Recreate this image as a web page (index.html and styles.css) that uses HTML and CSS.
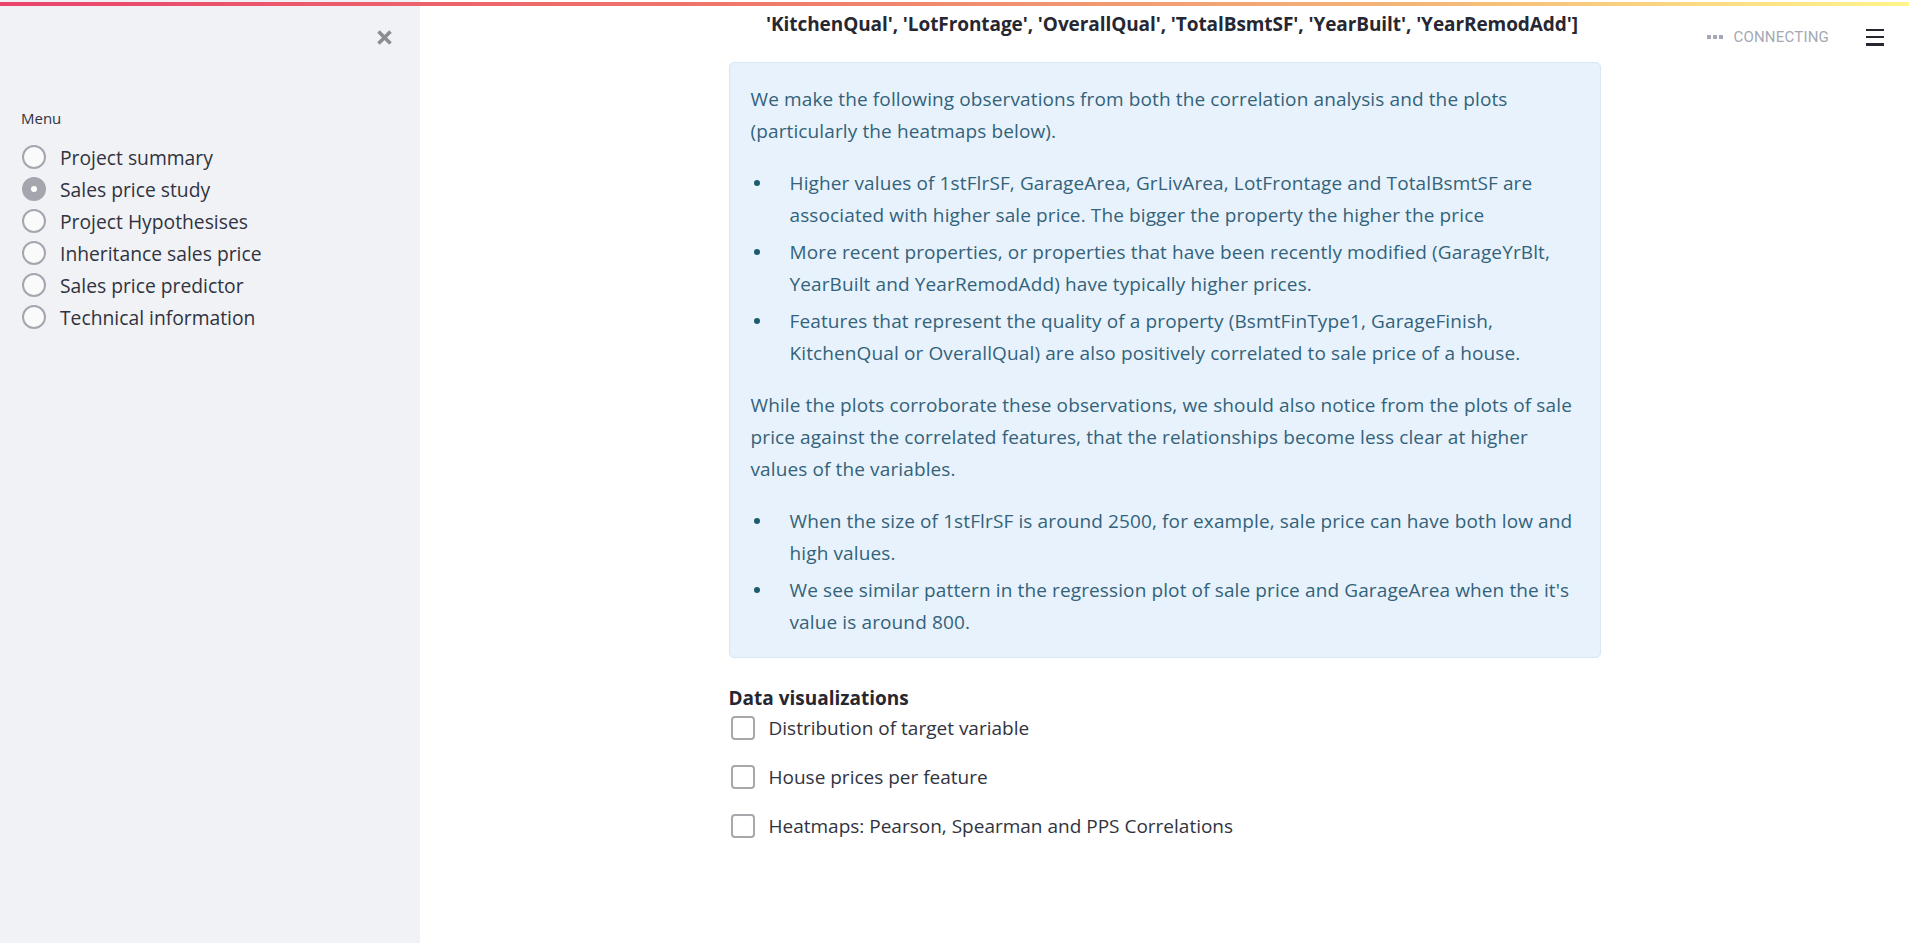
FILE: index.html
```html
<!DOCTYPE html>
<html lang="en">
<head>
<meta charset="utf-8">
<title>Sales price study</title>
<link rel="stylesheet" href="styles.css">
</head>
<body>
<div class="decoration"></div>
<div class="app">
  <aside class="sidebar">
    <div class="sidebar-top">
      <button class="close-btn" aria-label="Close sidebar">
        <svg width="17" height="17" viewBox="0 0 17 17"><path d="M2.5 2.5 L14.5 14.5 M14.5 2.5 L2.5 14.5" stroke="#8c8c91" stroke-width="3.6" stroke-linecap="butt"/></svg>
      </button>
    </div>
    <div class="menu-label">Menu</div>
    <ul class="radio-list">
      <li class="radio"><span class="circle"></span><span class="radio-text">Project summary</span></li>
      <li class="radio selected"><span class="circle"></span><span class="radio-text">Sales price study</span></li>
      <li class="radio"><span class="circle"></span><span class="radio-text">Project Hypothesises</span></li>
      <li class="radio"><span class="circle"></span><span class="radio-text">Inheritance sales price</span></li>
      <li class="radio"><span class="circle"></span><span class="radio-text">Sales price predictor</span></li>
      <li class="radio"><span class="circle"></span><span class="radio-text">Technical information</span></li>
    </ul>
  </aside>
  <main class="main">
    <div class="toolbar">
      <div class="status">
        <span class="dots"><i></i><i></i><i></i></span>
        <span class="status-text">CONNECTING</span>
      </div>
      <button class="hamburger" aria-label="Menu"><span></span><span></span><span></span></button>
    </div>
    <div class="block">
      <p class="feature-list">'KitchenQual', 'LotFrontage', 'OverallQual', 'TotalBsmtSF', 'YearBuilt', 'YearRemodAdd']</p>
      <div class="info">
        <p>We make the following observations from both the correlation analysis and the plots (particularly the heatmaps below).</p>
        <ul class="bullets">
          <li>Higher values of 1stFlrSF, GarageArea, GrLivArea, LotFrontage and TotalBsmtSF are associated with higher sale price. The bigger the property the higher the price</li>
          <li>More recent properties, or properties that have been recently modified (GarageYrBlt, YearBuilt and YearRemodAdd) have typically higher prices.</li>
          <li>Features that represent the quality of a property (BsmtFinType1, GarageFinish, KitchenQual or OverallQual) are also positively correlated to sale price of a house.</li>
        </ul>
        <p>While the plots corroborate these observations, we should also notice from the plots of sale price against the correlated features, that the relationships become less clear at higher<br>values of the variables.</p>
        <ul class="bullets last">
          <li>When the size of 1stFlrSF is around 2500, for example, sale price can have both low and high values.</li>
          <li>We see similar pattern in the regression plot of sale price and GarageArea when the it's value is around 800.</li>
        </ul>
      </div>
      <div class="section-title">Data visualizations</div>
      <div class="checks">
        <label class="check"><span class="box"></span><span class="check-text">Distribution of target variable</span></label>
        <label class="check"><span class="box"></span><span class="check-text">House prices per feature</span></label>
        <label class="check"><span class="box"></span><span class="check-text">Heatmaps: Pearson, Spearman and PPS Correlations</span></label>
      </div>
    </div>
  </main>
</div>
</body>
</html>
```

FILE: styles.css
```css
* { box-sizing: border-box; }
html, body {
  margin: 0;
  padding: 0;
  height: 100%;
  background: #ffffff;
  font-family: "Open Sans", "Noto Sans", sans-serif;
  color: #262730;
}
.decoration {
  position: fixed;
  top: 2px;
  left: 0;
  right: 0;
  height: 4px;
  background: linear-gradient(90deg, #e9436c 0%, #ef7a6b 40%, #f4b877 75%, #fff58c 100%);
  z-index: 10;
}
.app {
  display: flex;
  height: 100vh;
  overflow: hidden;
}
.sidebar {
  width: 420px;
  flex: 0 0 420px;
  background: #f0f2f6;
  padding: 0 0 0 21px;
}
.sidebar-top {
  display: flex;
  justify-content: flex-end;
  padding: 29px 27px 0 0;
  height: 108px;
}
.close-btn {
  border: 0;
  background: none;
  padding: 0;
  width: 17px;
  height: 17px;
  display: block;
  cursor: pointer;
}
.close-btn svg { display: block; }
.menu-label {
  font-size: 15px;
  line-height: 20px;
  color: #31333f;
  margin-bottom: 13px;
}
.radio-list {
  list-style: none;
  margin: 0;
  padding: 0;
}
.radio {
  display: flex;
  align-items: center;
  height: 32px;
}
.circle {
  width: 24px;
  height: 24px;
  border-radius: 50%;
  border: 2px solid #a4a6ad;
  background: #fafafa;
  margin: 0 14px 0 1px;
  flex: 0 0 24px;
}
.radio.selected .circle {
  background: #a4a6ad;
  border-color: #a4a6ad;
  position: relative;
}
.radio.selected .circle::after {
  content: "";
  position: absolute;
  left: 7px;
  top: 7px;
  width: 6px;
  height: 6px;
  border-radius: 50%;
  background: #ffffff;
}
.radio-text {
  font-size: 19.3px;
  color: #31333f;
}
.main {
  flex: 1;
  position: relative;
  display: flex;
  justify-content: center;
}
.toolbar {
  position: absolute;
  top: 22px;
  right: 25px;
  display: flex;
  align-items: center;
  gap: 37px;
  height: 30px;
}
.status {
  display: flex;
  align-items: center;
  gap: 10px;
}
.dots {
  display: flex;
  gap: 2px;
}
.dots i {
  display: block;
  width: 4px;
  height: 4px;
  background: #a3a8b4;
}
.status-text {
  font-family: Roboto, "Liberation Sans", sans-serif;
  font-size: 15px;
  color: #a3a8b4;
  letter-spacing: 0.2px;
}
.hamburger {
  border: 0;
  background: none;
  padding: 0;
  width: 18px;
  height: 17px;
  display: flex;
  flex-direction: column;
  justify-content: space-between;
}
.hamburger span {
  display: block;
  height: 2.5px;
  background: #262730;
}
.block {
  width: 872px;
  padding-top: 8px;
}
.feature-list {
  margin: 0 0 22px 0;
  font-size: 19px;
  font-weight: 700;
  line-height: 32px;
  text-align: center;
  padding-left: 15px;
  color: #262730;
  white-space: nowrap;
  letter-spacing: -0.08px;
}
.info {
  background: #e8f2fc;
  border: 1px solid #d6e6f5;
  border-radius: 5px;
  padding: 20px 16px 19px 21px;
  color: #33627a;
  font-size: 19px;
  letter-spacing: 0.12px;
  line-height: 32px;
}
.info p {
  margin: 0 0 20px 0;
}
.bullets {
  list-style: none;
  margin: 0 0 20px 0;
  padding: 0;
}
.bullets.last { margin-bottom: 0; }
.bullets li {
  display: flex;
  margin-bottom: 5px;
}
.bullets li:last-child { margin-bottom: 0; }
.bullets li::before {
  content: "";
  flex: 0 0 6px;
  height: 6px;
  border-radius: 50%;
  background: #1d5c6c;
  margin: 13px 30px 0 3px;
}
.section-title {
  margin-top: 26px;
  font-size: 19px;
  font-weight: 700;
  line-height: 28px;
  color: #262730;
}
.checks {
  display: flex;
  flex-direction: column;
  gap: 17px;
}
.check {
  display: flex;
  align-items: center;
  height: 32px;
}
.box {
  width: 24px;
  height: 24px;
  border: 2px solid #a8a8ac;
  border-radius: 4px;
  background: #ffffff;
  margin: 0 14px 0 2px;
  flex: 0 0 24px;
}
.check-text {
  font-size: 19px;
  color: #31333f;
}
```
